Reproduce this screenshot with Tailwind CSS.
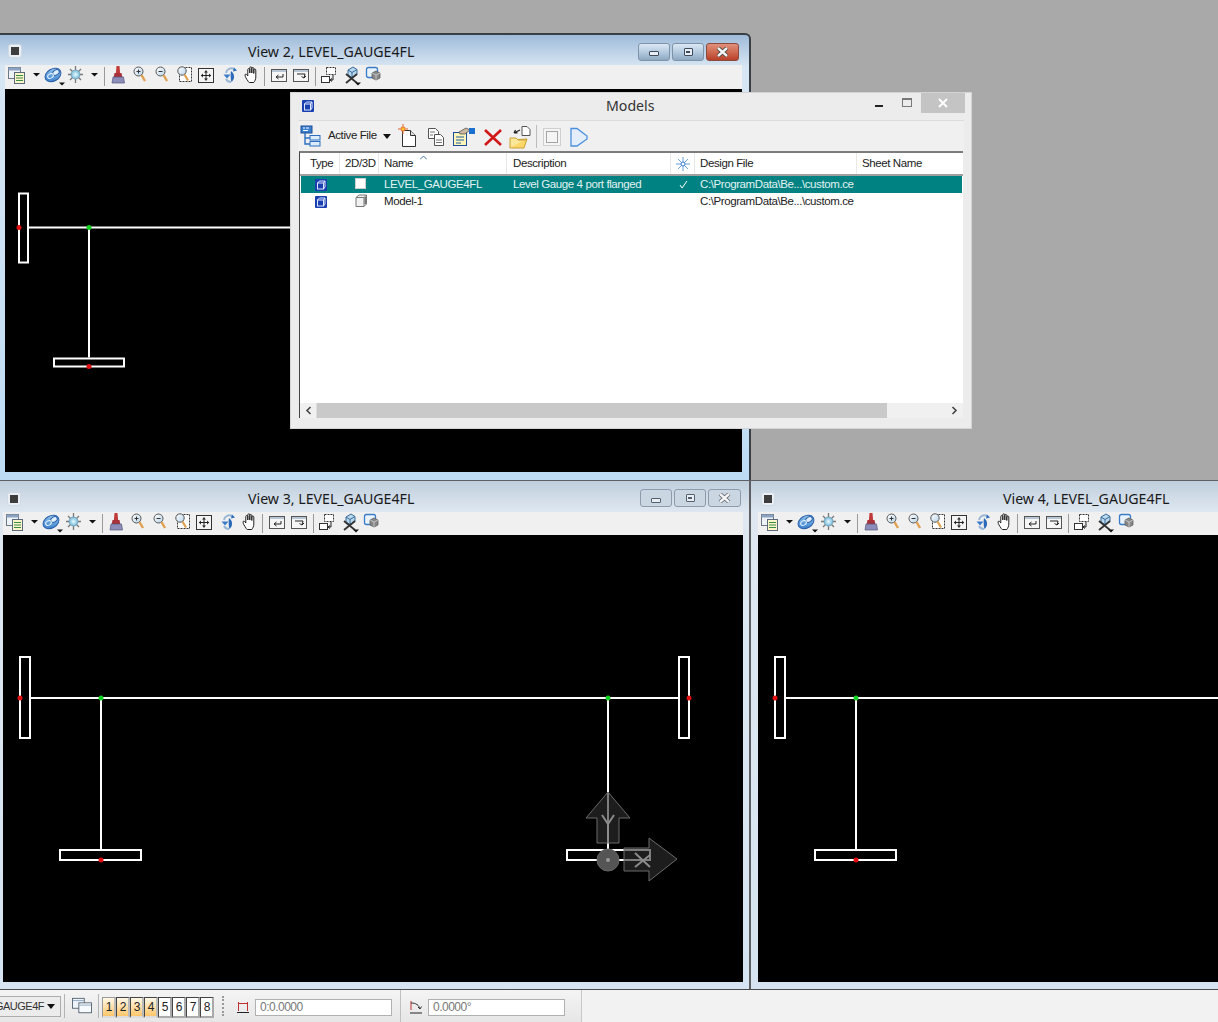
<!doctype html>
<html>
<head>
<meta charset="utf-8">
<script src="https://cdn.jsdelivr.net/npm/@tailwindcss/browser@4"></script>
</head>
<body class="m-0">
<div class="relative w-[1218px] h-[1022px] overflow-hidden bg-[#a9a9a9] font-['Liberation_Sans',sans-serif] text-[#111]">

<svg class="absolute w-0 h-0">
  <defs>
    <linearGradient id="mag" x1="0" y1="0" x2="1" y2="1"><stop offset="0" stop-color="#fff"/><stop offset="1" stop-color="#b8d4ea"/></linearGradient>
    <radialGradient id="sun"><stop offset="0" stop-color="#e8fbff"/><stop offset="1" stop-color="#74b8d8"/></radialGradient>
    <linearGradient id="ring" x1="0" y1="1" x2="1" y2="0"><stop offset="0" stop-color="#2a74c8"/><stop offset="1" stop-color="#a6d4f2"/></linearGradient>
    <symbol id="tb" viewBox="5 1 400 24">
      <!-- references -->
      <rect x="8.500" y="3.500" width="12" height="11" fill="#eef3f8" stroke="#6b7686"/><rect x="8.500" y="3.500" width="12" height="3" fill="#8ba3c0"/>
      <rect x="14.500" y="8.500" width="10" height="11" fill="#fdf6c8" stroke="#5a6a7c"/><path d="M16 11.500h7M16 14h7M16 16.500h7" stroke="#3a8a4a"/>
      <path d="M33 9h7l-3.500 3.500z" fill="#111"/>
      <!-- levels -->
      <ellipse cx="53" cy="11" rx="8.500" ry="6" transform="rotate(-30 53 11)" fill="url(#ring)" stroke="#2a5fa8"/>
      <ellipse cx="56" cy="8.500" rx="3.500" ry="2.500" transform="rotate(-30 56 8.500)" fill="#dff0fb" stroke="#2a5fa8"/>
      <ellipse cx="50.500" cy="12" rx="3" ry="2.200" transform="rotate(-30 50.500 12)" fill="none" stroke="#eaf6ff"/>
      <path d="M59 18.500h6l-3 3z" fill="#111"/>
      <!-- sun -->
      <path d="M75.500 2v4M75.500 15v4M68 10.500h4M79 10.500h4M70 5l3 3M81 5l-3 3M70 16l3-3M81 16l-3-3" stroke="#777" stroke-width="1.300"/>
      <circle cx="75.500" cy="10.500" r="4.500" fill="url(#sun)" stroke="#6a97ad" stroke-width=".7"/>
      <path d="M91 9h7l-3.500 3.500z" fill="#111"/>
      <path d="M104.500 3v19" stroke="#9a9a9a"/>
      <!-- brush -->
      <path d="M116.500 2h3l.6 7h-4.200z" fill="#c03a3a"/><path d="M114.500 9h7l.8 4h-8.600z" fill="#a8323a"/><path d="M113 13h10.500l1 6h-12.500z" fill="#8d8dba" stroke="#54547c" stroke-width=".7"/>
      <!-- zoom in -->
      <circle cx="138.500" cy="7.500" r="4.500" fill="url(#mag)" stroke="#555"/><path d="M136.500 7.500h4M138.500 5.500v4" stroke="#333"/><path d="M141.500 11l3.500 6" stroke="#e0a050" stroke-width="2.400"/>
      <!-- zoom out -->
      <circle cx="160.500" cy="7.500" r="4.500" fill="url(#mag)" stroke="#555"/><path d="M158.500 7.500h4" stroke="#333"/><path d="M163.500 11l3.500 6" stroke="#e0a050" stroke-width="2.400"/>
      <!-- window area -->
      <rect x="179.500" y="3.500" width="12" height="14" fill="#fff" stroke="#333" stroke-dasharray="2 1"/><circle cx="182" cy="7" r="4.200" fill="url(#mag)" stroke="#555"/><path d="M184.500 10.500l3.500 6" stroke="#e0a050" stroke-width="2.200"/>
      <!-- fit -->
      <rect x="198.500" y="4.500" width="15" height="14" fill="#f4f4f4" stroke="#333"/><path d="M201 11.500h10M206 6.500v10" stroke="#222"/><path d="M201 11.500l2-2v4zM211 11.500l-2-2v4zM206 6.500l-2 2h4zM206 16.500l-2-2h4z" fill="#222"/>
      <!-- rotate -->
      <path d="M226 9a5.500 5.500 0 0 1 8-4" fill="none" stroke="#9bb7d6" stroke-width="2"/><path d="M234 3.500l3 3-4 1z" fill="#2a6ab8"/>
      <path d="M231 7c4 3 4 8 .5 11 -1-2-1-9-.5-11z" fill="#2a6ab8"/><path d="M223.500 10.500h7l-3.500 4z" fill="#3a7cc8"/><path d="M226 15c1 2 3 3 5 3" fill="none" stroke="#9bb7d6" stroke-width="2"/>
      <!-- hand -->
      <path d="M248 17c-1.500-2-3-4.500-3-6 0-1 1.300-1 2-.2l.8 1.200V5.500c0-1.300 2-1.300 2 0V9 3.800c0-1.300 2-1.300 2 0V9 4.500c0-1.300 2-1.300 2 0V9.500 6c0-1.300 2-1.300 2 0v7c0 2.500-1 4-2 5.500h-4.500c-.6 0-1-1-1.300-1.500z" fill="#fff" stroke="#222"/>
      <path d="M264.500 3v19" stroke="#9a9a9a"/>
      <!-- prev/next -->
      <rect x="271.500" y="5.500" width="15" height="12" fill="#f6f6f6" stroke="#555"/><rect x="272" y="6" width="14" height="2" fill="#b9c6d4"/><path d="M283 10v3h-7M276 13l2.500-2M276 13l2.500 2" fill="none" stroke="#222"/>
      <rect x="293.500" y="5.500" width="15" height="12" fill="#f6f6f6" stroke="#555"/><rect x="294" y="6" width="14" height="2" fill="#b9c6d4"/><path d="M297 10h8l-1 4M304 14l-2.500-1.500M304 14l2-2" fill="none" stroke="#222"/>
      <path d="M315.500 3v19" stroke="#9a9a9a"/>
      <!-- copy -->
      <rect x="326.500" y="3.500" width="9" height="7" fill="#fff" stroke="#333" stroke-dasharray="2 1"/><rect x="321.500" y="12.500" width="8" height="6" fill="#fff" stroke="#333"/><path d="M333 11v5h-3M330 16l2-1.500M330 16l2 1.500" fill="none" stroke="#222"/>
      <!-- cube x -->
      <path d="M348 6l5-3 4 2.500v5l-5 3-4-2.500z" fill="#b8d8ee" stroke="#3a6a9a"/><path d="M348 6l4 2.500 5-3M352 8.500v5" stroke="#3a6a9a" fill="none"/>
      <path d="M346 10l11 9M357 10l-11 9" stroke="#333" stroke-width="1.800"/><path d="M355 18.500h6l-3 3z" fill="#111"/>
      <!-- model -->
      <rect x="366.500" y="3.500" width="11" height="10" rx="2" fill="#e8f3fb" stroke="#3a7cc8" stroke-width="1.300"/><path d="M372 9l4-2 4 2v5l-4 2-4-2z" fill="#888" stroke="#555" stroke-width=".7"/><path d="M372 9l4 2 4-2M376 11v5" stroke="#ddd" fill="none" stroke-width=".7"/>
    </symbol>
    <symbol id="model" viewBox="0 0 12 12"><rect width="12" height="12" rx="1" fill="#1a3fb0"/><rect x="2.500" y="4" width="6" height="6" fill="none" stroke="#dfe8ff"/><path d="M2.500 4l2-2h5.500v6l-1.500 2M8.500 4L10 2" fill="none" stroke="#dfe8ff"/></symbol>
    <symbol id="view-icon" viewBox="0 0 14 14"><rect x=".5" y=".5" width="13" height="13" rx="2.500" fill="#e9eff5" stroke="#cfd9e3"/><rect x="3" y="3" width="8" height="8" fill="#3d3d3d"/></symbol>
  </defs>
</svg>

<!-- View 2 -->
<section class="absolute left-0 top-[33px] w-[751px] h-[447px] flex flex-col pl-[5px] pr-[7px] pb-[8px] bg-[linear-gradient(#9fbbd9,#d8e6f3_32px,#bddcf4)] border-t-2 border-r-2 border-[#3a3f46] rounded-tr-[6px]">
  <div class="h-[30px] shrink-0 relative flex items-center">
    <svg class="w-[14px] h-[14px] ml-[3px] mt-[1px]"><use href="#view-icon"/></svg>
    <span class="absolute left-[243px] top-[7px] text-[14.160px] leading-[20px] font-['Noto_Sans',sans-serif] text-[#1a1a1a]">View 2, LEVEL_GAUGE4FL</span>
    <div class="ml-auto flex gap-[2px] mr-[3px] mt-[3px]">
      <div class="w-[32px] h-[18px] rounded-[3px] border border-[#7f93a8] bg-[linear-gradient(#dce8f3,#b5cbe0_50%,#8ea8c2)] flex items-center justify-center"><div class="w-[10px] h-[5px] border border-[#3c4c5c] bg-[#e8eef4] rounded-[1px] mt-[4px]"></div></div>
      <div class="w-[32px] h-[18px] rounded-[3px] border border-[#7f93a8] bg-[linear-gradient(#dce8f3,#b5cbe0_50%,#8ea8c2)] flex items-center justify-center"><div class="w-[9px] h-[8px] border border-[#3c4c5c] bg-[#e8eef4] rounded-[1px] flex items-center justify-center"><div class="w-[4px] h-[2px] bg-[#3c4c5c]"></div></div></div>
      <div class="w-[33px] h-[18px] rounded-[3px] border border-[#8a4a3c] bg-[linear-gradient(#e0907c,#cf6a50_50%,#b8402a)] flex items-center justify-center"><svg class="w-[13px] h-[10px]" viewBox="0 0 13 10"><path d="M2 1l9 8M11 1l-9 8" stroke="#3a3a3a" stroke-width="4"/><path d="M2 1l9 8M11 1l-9 8" stroke="#f4f4f4" stroke-width="2.400"/></svg></div>
    </div>
  </div>
  <div class="h-[24px] shrink-0 bg-[#f0f0f0]"><svg class="w-[400px] h-[24px]"><use href="#tb"/></svg></div>
  <div class="flex-1 bg-black overflow-hidden">
    <svg class="w-full h-full" viewBox="5 89 737 382">
      <path d="M29 227H300M89 227V357" stroke="#fff" stroke-width="2" fill="none"/>
      <rect x="19" y="193" width="9" height="69" fill="none" stroke="#fff" stroke-width="2"/>
      <rect x="54" y="358" width="70" height="8" fill="none" stroke="#fff" stroke-width="2"/>
      <circle cx="19" cy="227" r="2.500" fill="#e01010"/><circle cx="89" cy="227" r="2.500" fill="#10d020"/><circle cx="89" cy="366" r="2.500" fill="#e01010"/>
    </svg>
  </div>
</section>

<!-- View 3 -->
<section class="absolute left-0 top-[480px] w-[751px] h-[510px] flex flex-col pl-[3px] pr-[6px] pb-[8px] bg-[linear-gradient(#c0cfdd,#dfe8f1_32px,#d6e4f1)] border-t border-r-2 border-[#5e6064]">
  <div class="h-[31px] shrink-0 relative flex items-center">
    <svg class="w-[14px] h-[14px] ml-[4px] mt-[5px]"><use href="#view-icon"/></svg>
    <span class="absolute left-[245px] top-[8px] text-[14.160px] leading-[20px] font-['Noto_Sans',sans-serif] text-[#1a1a1a]">View 3, LEVEL_GAUGE4FL</span>
    <div class="ml-auto flex gap-[2px] mr-[2px] mt-[3px]">
      <div class="w-[32px] h-[18px] rounded-[3px] border border-[#8d9bab] bg-[#cad6e2] flex items-center justify-center"><div class="w-[10px] h-[5px] border border-[#55606c] bg-[#e8eef4] rounded-[1px] mt-[4px]"></div></div>
      <div class="w-[32px] h-[18px] rounded-[3px] border border-[#8d9bab] bg-[#cad6e2] flex items-center justify-center"><div class="w-[9px] h-[8px] border border-[#55606c] bg-[#e8eef4] rounded-[1px] flex items-center justify-center"><div class="w-[4px] h-[2px] bg-[#55606c]"></div></div></div>
      <div class="w-[33px] h-[18px] rounded-[3px] border border-[#8d9bab] bg-[#cad6e2] flex items-center justify-center"><svg class="w-[13px] h-[10px]" viewBox="0 0 13 10"><path d="M2 1l9 8M11 1l-9 8" stroke="#5a6068" stroke-width="4"/><path d="M2 1l9 8M11 1l-9 8" stroke="#f4f4f4" stroke-width="2.400"/></svg></div>
    </div>
  </div>
  <div class="h-[23px] shrink-0 bg-[#f0f0f0]"><svg class="w-[400px] h-[24px]"><use href="#tb"/></svg></div>
  <div class="flex-1 bg-black overflow-hidden">
    <svg class="w-full h-full" viewBox="3 535 740 447">
      <path d="M31 698H679M101 698V850M608 698V850" stroke="#fff" stroke-width="2" fill="none"/>
      <rect x="20" y="657" width="10" height="81" fill="none" stroke="#fff" stroke-width="2"/>
      <rect x="679" y="657" width="10" height="81" fill="none" stroke="#fff" stroke-width="2"/>
      <rect x="60" y="850" width="81" height="10" fill="none" stroke="#fff" stroke-width="2"/>
      <rect x="567" y="850" width="83" height="10" fill="none" stroke="#fff" stroke-width="2"/>
      <circle cx="20" cy="698" r="2.500" fill="#e01010"/><circle cx="689" cy="698" r="2.500" fill="#e01010"/><circle cx="101" cy="698" r="2.500" fill="#10d020"/><circle cx="608" cy="698" r="2.500" fill="#10d020"/><circle cx="101" cy="860" r="2.500" fill="#e01010"/>
      <!-- manipulator -->
      <path d="M608 792V850" stroke="#fff" stroke-width="2"/>
      <path d="M608 792L630 818H619V843H597V818H586z" fill="#2e2e2e" fill-opacity=".62" stroke="#6a6a6a"/>
      <path d="M624 848H649V838L677 859L649 881V871H624z" fill="#2e2e2e" fill-opacity=".62" stroke="#6a6a6a"/>
      <path d="M602 815L608 824L614 815M608 824V843" fill="none" stroke="#8c8c8c" stroke-width="2"/>
      <path d="M635 853L650 867M635 867L650 855" fill="none" stroke="#8c8c8c" stroke-width="2"/>
      <circle cx="608" cy="860" r="11" fill="#555" stroke="#666"/><circle cx="608" cy="860" r="2" fill="#999"/>
    </svg>
  </div>
</section>

<!-- View 4 -->
<section class="absolute left-[751px] top-[480px] w-[467px] h-[510px] flex flex-col pl-[7px] pb-[8px] bg-[linear-gradient(#c0cfdd,#dfe8f1_32px,#d6e4f1)] border-t border-[#5e6064]">
  <div class="h-[31px] shrink-0 relative flex items-center">
    <svg class="w-[14px] h-[14px] ml-[3px] mt-[5px]"><use href="#view-icon"/></svg>
    <span class="absolute left-[245px] top-[8px] text-[14.160px] leading-[20px] font-['Noto_Sans',sans-serif] text-[#1a1a1a]">View 4, LEVEL_GAUGE4FL</span>
  </div>
  <div class="h-[23px] shrink-0 bg-[#f0f0f0]"><svg class="w-[400px] h-[24px]"><use href="#tb"/></svg></div>
  <div class="flex-1 bg-black overflow-hidden">
    <svg class="w-full h-full" viewBox="758 535 460 447">
      <path d="M786 698H1218M856 698V850" stroke="#fff" stroke-width="2" fill="none"/>
      <rect x="775" y="657" width="10" height="81" fill="none" stroke="#fff" stroke-width="2"/>
      <rect x="815" y="850" width="81" height="10" fill="none" stroke="#fff" stroke-width="2"/>
      <circle cx="775" cy="698" r="2.500" fill="#e01010"/><circle cx="856" cy="698" r="2.500" fill="#10d020"/><circle cx="856" cy="860" r="2.500" fill="#e01010"/>
    </svg>
  </div>
</section>

<!-- Models dialog -->
<section class="absolute left-[290px] top-[92px] w-[682px] h-[337px] flex flex-col bg-[#ececec] border border-[#d4d4d4]">
  <div class="h-[27px] shrink-0 relative flex items-start">
    <svg class="w-[12px] h-[12px] ml-[11px] mt-[7px]"><use href="#model"/></svg>
    <span class="absolute left-[315px] top-[3px] text-[14.160px] leading-[20px] font-['Noto_Sans',sans-serif] text-[#333]">Models</span>
    <div class="ml-auto flex items-start mr-[6px]">
      <div class="w-[8px] h-[2px] bg-[#222] mt-[12px] mr-[19px]"></div>
      <div class="w-[10px] h-[9px] border border-[#777] border-t-2 mt-[5px] mr-[9px]"></div>
      <div class="w-[44px] h-[20px] bg-[#c4c4c4] flex items-center justify-center"><svg class="w-[10px] h-[10px]" viewBox="0 0 10 10"><path d="M1 1l8 8M9 1l-8 8" stroke="#fff" stroke-width="1.800"/></svg></div>
    </div>
  </div>
  <div class="h-[31px] shrink-0 mx-[7px] bg-[#f0f0f0] border-t border-[#dcdcdc] flex items-center text-[11.500px] tracking-[-0.4px] text-[#222]">
    <svg class="w-[22px] h-[22px] ml-[2px]" viewBox="0 0 22 22"><rect x="1" y="1" width="11" height="7" fill="#3a7fd0" stroke="#1a4f98"/><path d="M3 3h2M6 3h3M3 5.500h5" stroke="#fff"/><path d="M5 8v11h5M5 13h5" fill="none" stroke="#2a6fc0" stroke-width="1.400"/><rect x="10" y="10.500" width="10" height="4.500" fill="#dcecfa" stroke="#2a6fc0"/><rect x="10" y="16.500" width="10" height="4.500" fill="#dcecfa" stroke="#2a6fc0"/></svg>
    <span class="ml-[6px] w-[49px] whitespace-nowrap">Active File</span>
    <svg class="w-[8px] h-[5px] ml-[6px]" viewBox="0 0 8 5"><path d="M0 0h8L4 5z" fill="#111"/></svg>
    <svg class="ml-[6px] w-[192px] h-[26px]" viewBox="397 122 192 26">
      <path d="M402.500 129.500h8l5 5v11h-13z" fill="#fff" stroke="#333"/><path d="M410.500 129.500v5h5" fill="#ddd" stroke="#333"/><circle cx="403" cy="128" r="2.200" fill="#f7c530" stroke="#e0602a"/><path d="M403 123v2M403 131v2M398 128h2M406 128h2" stroke="#e0602a"/>
      <path d="M428.500 127.500h7l3 3v7h-10z" fill="#fff" stroke="#555"/><path d="M434.500 133.500h6l3 3v8h-9z" fill="#fff" stroke="#555"/><path d="M430 131h5M430 134h3M436 139h6M436 141.500h6" stroke="#777"/>
      <rect x="453.500" y="131.500" width="13" height="13" fill="#fdf6b8" stroke="#1a4f98"/><path d="M456 136h8M456 139h8M456 142h5" stroke="#1a5fa8"/><path d="M459 131l7-4 4 2-5 4h-5z" fill="#c9b9a0" stroke="#444" stroke-width=".7"/><rect x="469" y="127" width="6" height="6" fill="#1a6fd0"/>
      <path d="M485 129l16 15M501 129l-16 15" stroke="#d01818" stroke-width="2.600"/>
      <path d="M510 147l2-8 15-1-3 9z" fill="#fcd86a" stroke="#c8a030"/><path d="M510 147v-10l6 0 2 2h8v-1" fill="#fbe79a" stroke="#c8a030"/><path d="M522 125.500h5l3 3v6h-8z" fill="#fff" stroke="#555"/><path d="M520 129l-6 3M514 132l3.500-.2M514 132l1.500-3" fill="none" stroke="#222" stroke-width="1.200"/>
      <path d="M536.500 124v23" stroke="#bcbcbc"/>
      <rect x="543.500" y="127.500" width="17" height="17" fill="#f4f4f4" stroke="#cfcfcf"/><rect x="546.500" y="130.500" width="11" height="11" fill="none" stroke="#555" stroke-dasharray="1 1"/>
      <path d="M571 127.500h6l10 7.500v3l-10 7h-6z" fill="#e4eefb" stroke="#4a90dc" stroke-width="1.300"/>
    </svg>
  </div>
  <div class="flex-1 mx-[8px] mb-[10px] bg-white border-t-2 border-l border-[#7c7c7c] border-l-[#444] flex flex-col text-[11.500px] tracking-[-0.4px] text-[#222]">
    <div class="h-[21px] shrink-0 ml-[1px] grid grid-cols-[39px_39px_128px_164px_24px_162px_1fr] items-center">
      <span class="pl-[9px] border-r border-[#e8e8e8] leading-[21px]">Type</span>
      <span class="pl-[5px] border-r border-[#e8e8e8] leading-[21px]">2D/3D</span>
      <span class="pl-[5px] border-r border-[#e8e8e8] leading-[21px] relative">Name<svg class="absolute left-[41px] top-[2px] w-[7px] h-[5px]" viewBox="0 0 7 5"><path d="M0 4.500L3.500 1 7 4.500" fill="none" stroke="#4a7aa8"/></svg></span>
      <span class="pl-[6px] border-r border-[#e8e8e8] leading-[21px]">Description</span>
      <span class="border-r border-[#e8e8e8] h-[21px] flex items-center justify-center"><svg class="w-[14px] h-[14px]" viewBox="0 0 14 14"><path d="M7 0v14M0 7h14M2 2l10 10M12 2L2 12" stroke="#6aa0dc"/><circle cx="7" cy="7" r="2" fill="#fff" stroke="#3a80d0"/></svg></span>
      <span class="pl-[5px] border-r border-[#e8e8e8] leading-[21px]">Design File</span>
      <span class="pl-[5px] leading-[21px]">Sheet Name</span>
    </div>
    <div class="h-[2px] shrink-0 bg-[#a0a0a0]"></div>
    <div class="h-[17px] shrink-0 ml-[1px] mr-[1px] grid grid-cols-[39px_39px_128px_164px_24px_162px_1fr] items-center bg-[#008282] text-[#e4f2f2]">
      <svg class="w-[12px] h-[12px] ml-[14px]"><use href="#model"/></svg>
      <span class="w-[11px] h-[11px] ml-[15px] mb-[2px] bg-white border border-[#cfcfcf]"></span>
      <span class="pl-[5px] whitespace-nowrap">LEVEL_GAUGE4FL</span>
      <span class="pl-[6px] whitespace-nowrap">Level Gauge 4 port flanged</span>
      <svg class="w-[9px] h-[9px] ml-[8px]" viewBox="0 0 9 9"><path d="M1 5l2 3 5-7" fill="none" stroke="#fff"/></svg>
      <span class="pl-[5px] whitespace-nowrap">C:\ProgramData\Be...\custom.ce</span>
      <span></span>
    </div>
    <div class="h-[17px] shrink-0 ml-[1px] grid grid-cols-[39px_39px_128px_164px_24px_162px_1fr] items-center">
      <svg class="w-[12px] h-[12px] ml-[14px]"><use href="#model"/></svg>
      <svg class="w-[13px] h-[13px] ml-[15px] mb-[2px]" viewBox="0 0 13 13"><path d="M1 3.500l3-2.500h7.500v9l-2.500 2.500H1z" fill="#f2f2f2" stroke="#777"/><path d="M1 3.500h8v9M9 3.500l2.500-2.500" fill="none" stroke="#777"/><rect x="9.500" y="3" width="1.500" height="7" fill="#777"/></svg>
      <span class="pl-[5px] whitespace-nowrap">Model-1</span>
      <span></span>
      <span></span>
      <span class="pl-[5px] whitespace-nowrap">C:\ProgramData\Be...\custom.ce</span>
      <span></span>
    </div>
    <div class="flex-1"></div>
    <div class="h-[15px] shrink-0 flex items-stretch bg-[#f0f0f0]">
      <div class="w-[17px] bg-[#f0f0f0] border-r border-[#dedede] flex items-center justify-center"><svg class="w-[7px] h-[9px]" viewBox="0 0 7 9"><path d="M5.500 1L2 4.500 5.500 8" fill="none" stroke="#444" stroke-width="1.600"/></svg></div>
      <div class="w-[570px] bg-[#c9c9c9]"></div>
      <div class="flex-1"></div>
      <div class="w-[17px] flex items-center justify-center"><svg class="w-[7px] h-[9px]" viewBox="0 0 7 9"><path d="M1.500 1L5 4.500 1.500 8" fill="none" stroke="#444" stroke-width="1.600"/></svg></div>
    </div>
  </div>
</section>

<!-- Status bar -->
<footer class="absolute left-0 top-[989px] w-[1218px] h-[33px] border-t border-[#4a4a4a] bg-[#f2f2f2] flex items-center text-[12px] text-[#333]">
  <div class="w-[582px] h-full flex items-center bg-[linear-gradient(#f4f4f4,#e6e6e6)] border-r border-[#c8c8c8]">
    <div class="w-[61px] h-[21px] mt-[1px] shrink-0 border border-l-0 border-[#adadad] bg-[#ececec] flex items-center justify-end pr-[5px] overflow-hidden"><span class="text-[11px] tracking-[-0.5px] whitespace-nowrap">GAUGE4F</span><svg class="w-[8px] h-[5px] ml-[3px] shrink-0" viewBox="0 0 8 5"><path d="M0 0h8L4 5z" fill="#111"/></svg></div>
    <div class="w-px h-[24px] bg-[#b4b4b4] ml-[3px]"></div>
    <svg class="w-[20px] h-[18px] ml-[7px]" viewBox="0 0 22 20"><rect x=".5" y="1.500" width="13" height="11" fill="#eef4fa" stroke="#50606e"/><rect x="7.500" y="6.500" width="14" height="11" fill="#f8fbfe" stroke="#50606e"/><path d="M1 4h12M8 9h13" stroke="#88a4c0"/></svg>
    <div class="w-px h-[24px] bg-[#b4b4b4] ml-[6px]"></div>
    <div class="flex ml-[3px] mt-[2px] text-[#222]">
      <span class="w-[14px] h-[21px] pl-[1px] flex items-center justify-center border-l border-t border-[#999] bg-[linear-gradient(#fff8e8,#ffc66a)] border-b-2 border-r-2 border-r-[#bbb] border-b-[#ddd]">1</span>
      <span class="w-[14px] h-[21px] pl-[1px] flex items-center justify-center border-l border-t border-[#444] bg-[linear-gradient(#fff8e8,#ffc66a)] border-b-2 border-r-2 border-r-[#bbb] border-b-[#ddd]">2</span>
      <span class="w-[14px] h-[21px] pl-[1px] flex items-center justify-center border-l border-t border-[#444] bg-[linear-gradient(#fff8e8,#ffc66a)] border-b-2 border-r-2 border-r-[#bbb] border-b-[#ddd]">3</span>
      <span class="w-[14px] h-[21px] pl-[1px] flex items-center justify-center border-l border-t border-[#444] bg-[linear-gradient(#fff8e8,#ffc66a)] border-b-2 border-r-2 border-r-[#bbb] border-b-[#ddd]">4</span>
      <span class="w-[14px] h-[21px] pl-[1px] flex items-center justify-center border-l border-t border-[#444] bg-white border-b-2 border-r-2 border-r-[#aaa] border-b-[#aaa]">5</span>
      <span class="w-[14px] h-[21px] pl-[1px] flex items-center justify-center border-l border-t border-[#444] bg-white border-b-2 border-r-2 border-r-[#aaa] border-b-[#aaa]">6</span>
      <span class="w-[14px] h-[21px] pl-[1px] flex items-center justify-center border-l border-t border-[#444] bg-white border-b-2 border-r-2 border-r-[#aaa] border-b-[#aaa]">7</span>
      <span class="w-[14px] h-[21px] pl-[1px] flex items-center justify-center border-l border-t border-[#444] bg-white border-b-2 border-r-2 border-r-[#aaa] border-b-[#aaa]">8</span>
    </div>
    <div class="h-[20px] ml-[8px] border-l-2 border-dotted border-[#999]"></div>
    <svg class="w-[12px] h-[12px] ml-[13px] mt-[2px]" viewBox="0 0 12 12"><path d="M1.500 1v9M10.500 1v9" stroke="#c03030"/><path d="M1 2.500h10" stroke="#c03030"/><path d="M0 11.500h12" stroke="#222"/></svg>
    <div class="w-[137px] h-[17px] mt-[3px] ml-[6px] border border-[#b0b0b0] bg-white pl-[4px] leading-[15px] text-[#777] tracking-[-0.5px]">0:0.0000</div>
    <div class="w-px h-full bg-[#c0c0c0] ml-[8px]"></div>
    <svg class="w-[14px] h-[14px] ml-[8px] mt-[2px]" viewBox="0 0 14 14"><path d="M2 1v9" stroke="#c03030"/><path d="M2 3c5 0 8 2 9 6M11 9l-2-2M11 9l1.500-2.500" fill="none" stroke="#333"/><path d="M1 13h12" stroke="#222"/></svg>
    <div class="w-[137px] h-[17px] mt-[3px] ml-[5px] border border-[#b0b0b0] bg-white pl-[4px] leading-[15px] text-[#777] tracking-[-0.5px]">0.0000°</div>
  </div>
</footer>

</div>
</body>
</html>
